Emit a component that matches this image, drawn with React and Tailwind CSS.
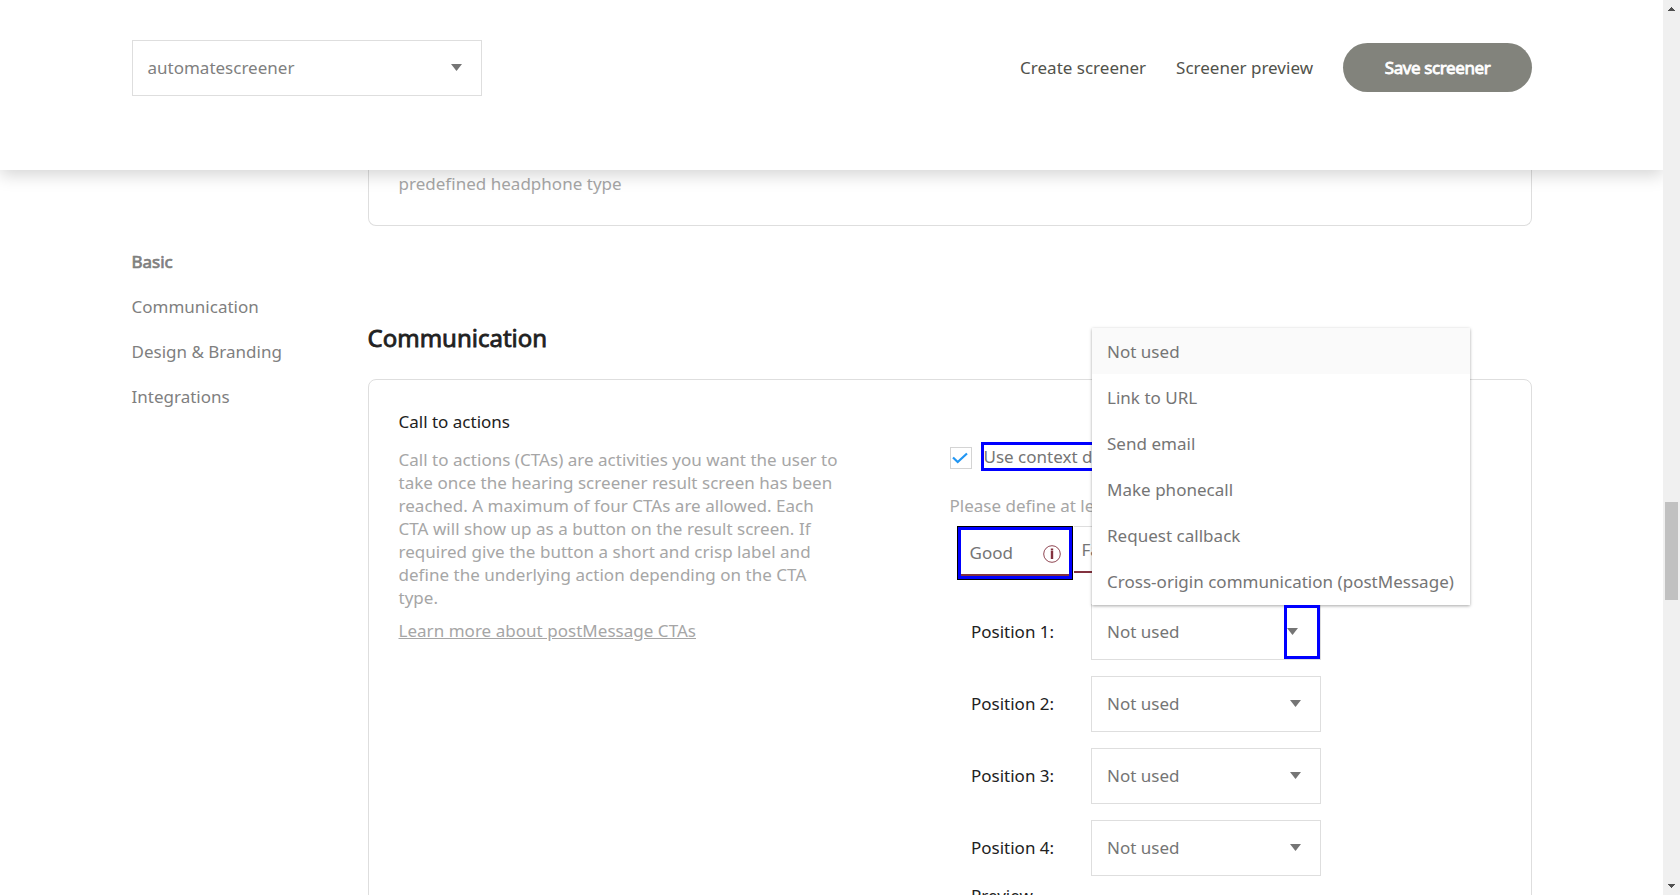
const options = ["Not used", "Link to URL", "Send email", "Make phonecall", "Request callback", "Cross-origin communication (postMessage)"];

function Caret({ className = "" }) {
  return (
    <svg width="11" height="7" viewBox="0 0 11 7" className={`shrink-0 fill-[#757575] ${className}`}>
      <path d="M0 0H11L5.5 7Z" />
    </svg>
  );
}

function Header() {
  return (
    <header className="relative z-10 h-[170px] shrink-0 bg-white pl-[132px] pr-[131px] pt-10 shadow-[0_5px_16px_rgba(0,0,0,0.17)]">
      <div className="flex h-14 items-center">
        <div className="mr-auto flex h-14 w-[350px] items-center justify-between border border-[#dedede] pl-[14.5px] pr-[19px]">
          <span className="text-[#7f7f7f]">automatescreener</span>
          <Caret className="-mt-[2px]" />
        </div>
        <nav className="flex items-center gap-[30px] text-[#51524b]">
          <a>Create screener</a>
          <a>Screener preview</a>
          <button className="-mt-[1px] h-[49px] w-[189px] rounded-full bg-[#82837c] tracking-[-0.4px] text-white [-webkit-text-stroke:0.8px_white]">
            Save screener
          </button>
        </nav>
      </div>
    </header>
  );
}

function Sidebar() {
  return (
    <aside className="-ml-[0.5px] w-[236.5px] shrink-0 pt-[69px] leading-[45px] text-[#7f7f7f]">
      <div className="[-webkit-text-stroke:0.7px_#7f7f7f]">Basic</div>
      <div>Communication</div>
      <div>Design &amp; Branding</div>
      <div>Integrations</div>
    </aside>
  );
}

function OptionMenu() {
  return (
    <ul className="absolute bottom-[54px] left-0 z-[5] w-[378px] bg-white pb-px shadow-[0_1px_3px_rgba(0,0,0,0.35)]">
      {options.map((o, i) => (
        <li key={o} className={`flex h-[46px] items-center whitespace-nowrap pl-[15px] pt-[2px] tracking-[0.02px] text-[#757575] ${i === 0 ? "bg-[#fafafa]" : ""}`}>
          {o}
        </li>
      ))}
    </ul>
  );
}

function Position({ n }) {
  const open = n === 1;
  return (
    <div className="flex h-14 items-center">
      <span className="w-[120px] text-[#212121]">Position {n}:</span>
      <div className="relative flex h-14 w-[230px] items-center justify-between border border-[#dedede] pl-[15px] text-[#757575]">
        Not used
        {open ? (
          <span className="relative z-[6] flex h-[54px] w-9 items-center border-[3px] border-[#0000ff]">
            <Caret className="-mt-[2px]" />
          </span>
        ) : (
          <Caret className="-mt-[2px] mr-[19px]" />
        )}
        {open && <OptionMenu />}
      </div>
    </div>
  );
}

function Controls() {
  return (
    <div className="-ml-[0.5px] w-[520px] pt-[62px]">
      <div className="flex items-center">
        <span className="mt-[3px] flex size-[22px] items-center justify-center border border-[#d4d4d4]">
          <svg width="16" height="12" viewBox="0 0 16 12" fill="none" className="-ml-[2px] -mt-px stroke-[#2196f3]" strokeWidth="2.2">
            <path d="M1 5.5L5.7 10L15 1.5" />
          </svg>
        </span>
        <span className="ml-[9px] flex h-[29px] items-center border-[3px] border-[#0000ff] text-[#757575]">Use context dependent</span>
      </div>
      <p className="mt-[23px] leading-[23px] text-[#a6a6a6]">Please define at least one CTA</p>
      <div className="ml-[7.5px] mt-[9px] flex w-[513px] items-start">
        <div className="h-[54px] w-[116px] border border-black">
          <div className="h-[52px] border-[3px] border-[#0000ff]">
            <div className="flex h-[46px] items-center justify-between border-b-2 border-[#83323f] pl-[8.5px] pr-[8px] pt-[2px] text-[#757575]">
              Good
              <svg width="18" height="18" viewBox="0 0 18 18" fill="none" className="mt-px stroke-[#83323f]">
                <circle cx="9" cy="9" r="8.3" strokeWidth="0.9" />
                <path d="M9 3.6V5.6M9 6V14" strokeWidth="2.4" />
              </svg>
            </div>
          </div>
        </div>
        <div className="ml-px flex h-[47px] w-[396px] items-center border-b-2 border-r border-t border-b-[#83323f] border-r-[#dedede] border-t-[#dedede] pl-[7.5px] pt-px text-[#757575]">
          Fair
        </div>
      </div>
      <div className="ml-[21.5px] mt-6 flex flex-col gap-4">
        {[1, 2, 3, 4].map((n) => (
          <Position key={n} n={n} />
        ))}
      </div>
      <p className="ml-[21.5px] mt-2 leading-[23px] text-[#212121]">Preview</p>
    </div>
  );
}

function Scrollbar() {
  return (
    <div className="flex h-full w-[17px] shrink-0 flex-col items-center bg-[#f0f0f0]">
      <svg width="7" height="4" viewBox="0 0 7 4" shapeRendering="crispEdges" className="mt-[7px] shrink-0 fill-[#505050]">
        <path d="M3 0h1v1h1v1h1v1h1v1H0V3h1V2h1V1h1z" />
      </svg>
      <div className="mt-[491px] h-[98px] w-[13px] shrink-0 bg-[#c1c1c1]" />
      <svg width="7" height="4" viewBox="0 0 7 4" shapeRendering="crispEdges" className="mb-[7px] mt-auto shrink-0 fill-[#505050]">
        <path d="M0 0h7v1H6v1H5v1H4v1H3V3H2V2H1V1H0z" />
      </svg>
    </div>
  );
}

export default function App() {
  return (
    <div className="flex h-[895px] w-[1680px] overflow-hidden bg-white font-['Noto_Sans',sans-serif] text-[17px]">
      <div className="flex h-full w-[1663px] flex-col overflow-hidden">
        <Header />
        <div className="flex min-h-0 flex-1 pl-[132px]">
          <Sidebar />
          <main className="w-[1164px]">
            <section className="h-[56px] rounded-b-lg border border-t-0 border-[#dedede] pl-[29.5px] pt-[2px] leading-[23px] tracking-[0.02px] text-[#a6a6a6]">
              predefined headphone type
            </section>
            <h2 className="-ml-[0.5px] mt-[94px] text-[24px] leading-9 text-[#212121] [-webkit-text-stroke:0.8px_#212121]">Communication</h2>
            <section className="mt-[23px] flex h-[700px] rounded-lg border border-[#dedede] pl-[29.5px]">
              <div className="w-[551.5px] pt-[30px] leading-[23px] tracking-[0.03px] text-[#a6a6a6]">
                <h3 className="tracking-normal text-[#212121]">Call to actions</h3>
                <p className="mt-[15px] w-[446px]">
                  Call to actions (CTAs) are activities you want the user to take once the hearing screener result screen has been reached. A maximum of four CTAs are allowed. Each CTA will show up as a button on the result screen. If required give the button a short and crisp label and define the underlying action depending on the CTA type.
                </p>
                <a className="mt-[10px] block underline">Learn more about postMessage CTAs</a>
              </div>
              <Controls />
            </section>
          </main>
        </div>
      </div>
      <Scrollbar />
    </div>
  );
}
